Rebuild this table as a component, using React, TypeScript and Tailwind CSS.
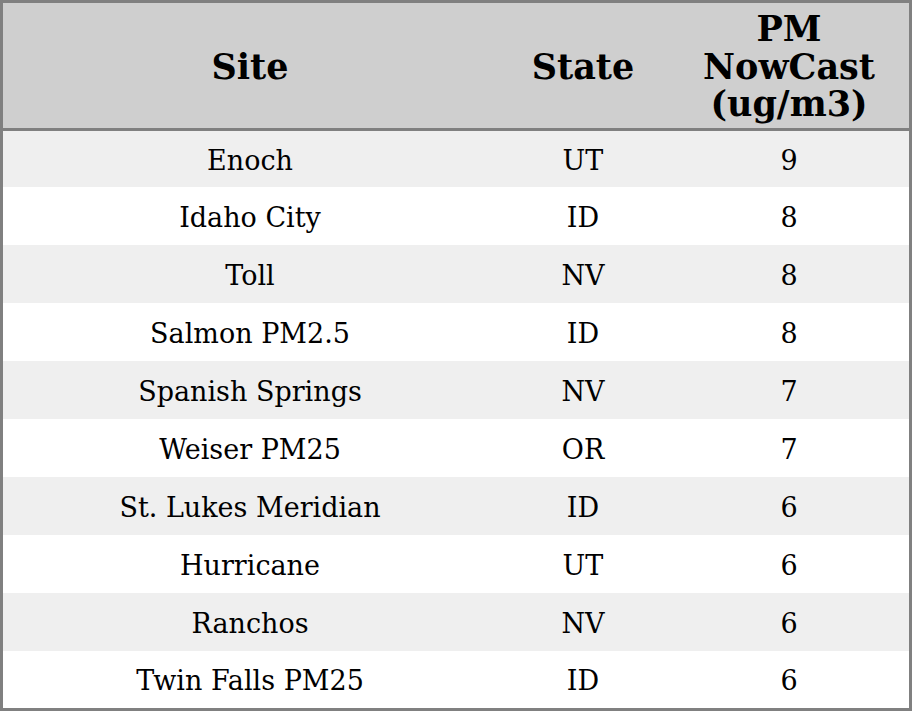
type Row = {
  site: string;
  state: string;
  pm: number;
};

const rows: Row[] = [
  { site: 'Enoch', state: 'UT', pm: 9 },
  { site: 'Idaho City', state: 'ID', pm: 8 },
  { site: 'Toll', state: 'NV', pm: 8 },
  { site: 'Salmon PM2.5', state: 'ID', pm: 8 },
  { site: 'Spanish Springs', state: 'NV', pm: 7 },
  { site: 'Weiser PM25', state: 'OR', pm: 7 },
  { site: 'St. Lukes Meridian', state: 'ID', pm: 6 },
  { site: 'Hurricane', state: 'UT', pm: 6 },
  { site: 'Ranchos', state: 'NV', pm: 6 },
  { site: 'Twin Falls PM25', state: 'ID', pm: 6 },
];

const cols = 'grid grid-cols-[494px_172px_240px]';

export default function App() {
  return (
    <div className="w-[912px] h-[711px] bg-white text-black font-['DejaVu_Serif',serif]">
      <div className="border-[3px] border-[#808080]">
        <div className={`${cols} h-[128px] pt-[2px] bg-[#cfcfcf] border-b-[3px] border-[#808080] text-[35px] font-bold leading-[37.5px]`}>
          <div className="flex items-center justify-center text-center">Site</div>
          <div className="flex items-center justify-center text-center">State</div>
          <div className="flex items-center justify-center text-center">
            PM
            <br />
            NowCast
            <br />
            (ug/m3)
          </div>
        </div>
        {rows.map((row, i) => (
          <div
            key={row.site}
            className={`${cols} pt-[4px] text-[27px] ${i === 0 ? 'h-[56px]' : i === rows.length - 1 ? 'h-[57px]' : 'h-[58px]'} ${
              i % 2 === 0 ? 'bg-[#efefef]' : 'bg-white'
            }`}
          >
            <div className="flex items-center justify-center">{row.site}</div>
            <div className="flex items-center justify-center">{row.state}</div>
            <div className="flex items-center justify-center">{row.pm}</div>
          </div>
        ))}
      </div>
    </div>
  );
}
